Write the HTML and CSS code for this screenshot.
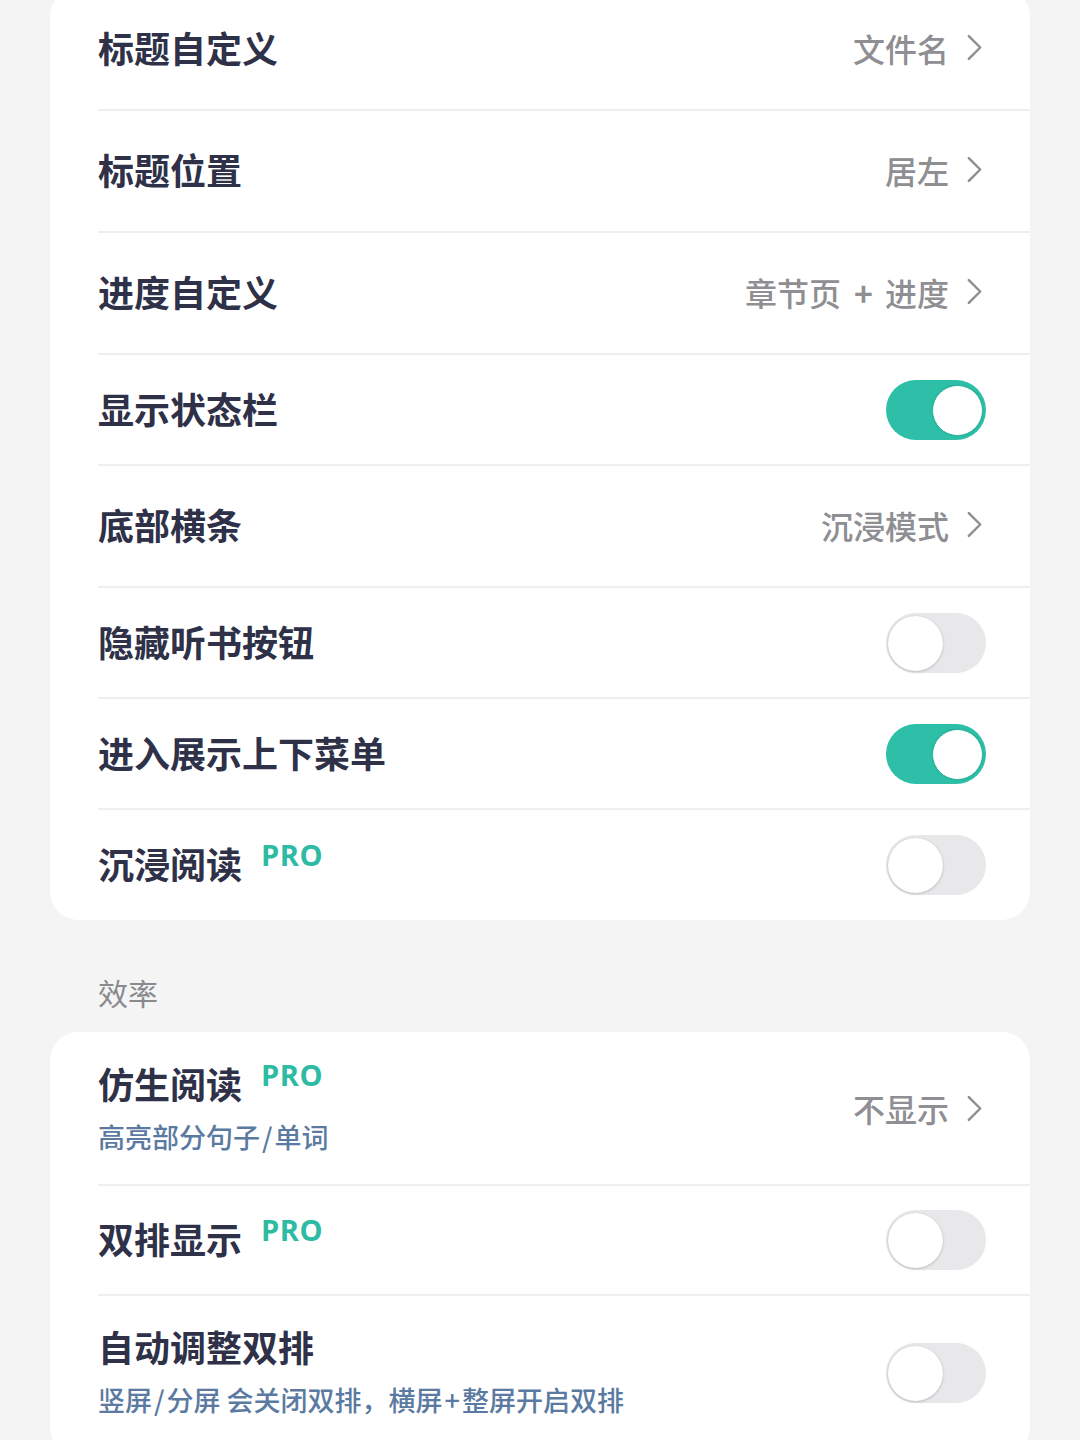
FILE: index.html
```html
<!DOCTYPE html>
<html lang="zh-CN">
<head>
<meta charset="utf-8">
<link rel="stylesheet" href="styles.css">
</head>
<body>
<div class="page">
  <div class="card card-first">
    <div class="row row-nav">
      <div class="title">标题自定义</div>
      <div class="value">文件名<svg class="chev" viewBox="0 0 20 28"><path d="M4 2 L16 14 L4 26" fill="none" stroke="#8e8e93" stroke-width="2.6" stroke-linecap="round" stroke-linejoin="round"/></svg></div>
    </div>
    <div class="row row-nav">
      <div class="title">标题位置</div>
      <div class="value">居左<svg class="chev" viewBox="0 0 20 28"><path d="M4 2 L16 14 L4 26" fill="none" stroke="#8e8e93" stroke-width="2.6" stroke-linecap="round" stroke-linejoin="round"/></svg></div>
    </div>
    <div class="row row-nav">
      <div class="title">进度自定义</div>
      <div class="value">章节页<span class="plus">+</span>进度<svg class="chev" viewBox="0 0 20 28"><path d="M4 2 L16 14 L4 26" fill="none" stroke="#8e8e93" stroke-width="2.6" stroke-linecap="round" stroke-linejoin="round"/></svg></div>
    </div>
    <div class="row row-toggle">
      <div class="title">显示状态栏</div>
      <div class="toggle on"><span class="knob"></span></div>
    </div>
    <div class="row row-nav">
      <div class="title">底部横条</div>
      <div class="value">沉浸模式<svg class="chev" viewBox="0 0 20 28"><path d="M4 2 L16 14 L4 26" fill="none" stroke="#8e8e93" stroke-width="2.6" stroke-linecap="round" stroke-linejoin="round"/></svg></div>
    </div>
    <div class="row row-toggle">
      <div class="title">隐藏听书按钮</div>
      <div class="toggle"><span class="knob"></span></div>
    </div>
    <div class="row row-toggle">
      <div class="title">进入展示上下菜单</div>
      <div class="toggle on"><span class="knob"></span></div>
    </div>
    <div class="row row-toggle row-short last">
      <div class="title">沉浸阅读<span class="pro">PRO</span></div>
      <div class="toggle"><span class="knob"></span></div>
    </div>
  </div>

  <div class="section">效率</div>

  <div class="card">
    <div class="row row-tall">
      <div class="text">
        <div class="title">仿生阅读<span class="pro">PRO</span></div>
        <div class="sub">高亮部分句子<span class="sym">/</span>单词</div>
      </div>
      <div class="value value-low">不显示<svg class="chev" viewBox="0 0 20 28"><path d="M4 2 L16 14 L4 26" fill="none" stroke="#8e8e93" stroke-width="2.6" stroke-linecap="round" stroke-linejoin="round"/></svg></div>
    </div>
    <div class="row row-toggle row-short">
      <div class="title">双排显示<span class="pro">PRO</span></div>
      <div class="toggle"><span class="knob"></span></div>
    </div>
    <div class="row row-tall2 last">
      <div class="text">
        <div class="title">自动调整双排</div>
        <div class="sub">竖屏<span class="sym">/</span>分屏 会关闭双排，横屏<span class="sym">+</span>整屏开启双排</div>
      </div>
      <div class="toggle"><span class="knob"></span></div>
    </div>
  </div>
</div>
</body>
</html>
```

FILE: styles.css
```css
* { box-sizing: border-box; }
html, body {
  margin: 0;
  padding: 0;
  background: #f4f4f4;
  font-family: "Noto Sans CJK SC", "Noto Sans", sans-serif;
}
.page {
  padding: 0 50px;
  height: 1440px;
  overflow: hidden;
}
.card {
  background: #ffffff;
  border-radius: 28px;
}
.card-first {
  margin-top: -11px;
}
.row {
  display: flex;
  align-items: center;
  justify-content: space-between;
  margin-left: 48px;
  padding-right: 44px;
  border-bottom: 2px solid #efefef;
}
.row.last { border-bottom: none; }
.row-nav { height: 122px; }
.row-toggle { height: 111px; }
.row-toggle.row-short { height: 110px; }
.row-tall { height: 154px; }
.row-tall2 { height: 160px; align-items: flex-start; padding-top: 28px; }
.row-tall2 .toggle { margin-top: 19px; }
.title {
  font-size: 36px;
  font-weight: 700;
  color: #2e3147;
  line-height: 44px;
  display: flex;
  align-items: flex-start;
}
.row > .title { margin-bottom: 4px; }
.pro {
  font-family: "Open Sans", "Noto Sans", sans-serif;
  font-size: 29px;
  font-weight: 700;
  color: #2dbba3;
  line-height: 28px;
  margin-left: 19px;
  margin-top: 0px;
  letter-spacing: 0.6px;
}
.value {
  display: flex;
  align-items: center;
  font-size: 32px;
  font-weight: 500;
  color: #8e8e93;
  line-height: 40px;
  padding-right: 2px;
  margin-bottom: 3px;
}
.plus {
  font-weight: 700;
  margin: 0 12px 0 13px;
}
.value-low { margin-bottom: 0px; }
.chev {
  width: 19px;
  height: 27px;
  margin-left: 16px;
}
.text {
  display: flex;
  flex-direction: column;
}
.sub {
  font-size: 27px;
  font-weight: 500;
  color: #5b7aa1;
  line-height: 36px;
  margin-top: 14px;
}
.sym {
  margin: 0 2px;
}
.toggle {
  position: relative;
  width: 100px;
  height: 60px;
  border-radius: 30px;
  background: #e8e8ea;
  flex-shrink: 0;
}
.toggle .knob {
  position: absolute;
  top: 3px;
  left: 2px;
  width: 55px;
  height: 55px;
  border-radius: 50%;
  background: #ffffff;
  box-shadow: 0 1px 3px rgba(0,0,0,0.18), 0 0 1px rgba(0,0,0,0.12);
}
.toggle.on {
  background: #2dbfa7;
}
.toggle.on .knob {
  left: auto;
  right: 3px;
  top: 5px;
  width: 51px;
  height: 51px;
  box-shadow: 0 0 2px rgba(0,0,0,0.12);
  border: 1px solid #27b39b;
}
.section {
  padding: 52px 0 20px 48px;
  font-size: 30px;
  line-height: 40px;
  color: #8a8a8e;
}
```
